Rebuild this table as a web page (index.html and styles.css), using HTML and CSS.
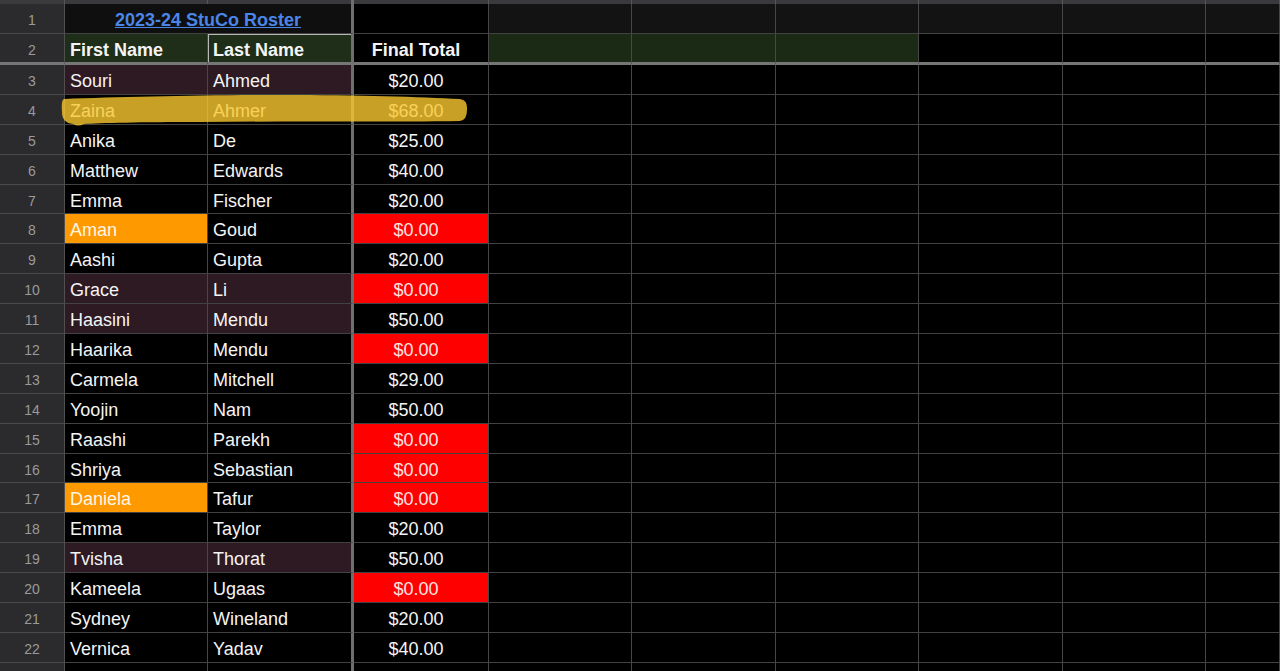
FILE: index.html
```html
<!DOCTYPE html>
<html>
<head>
<meta charset="utf-8">
<title>2023-24 StuCo Roster</title>
<link rel="stylesheet" href="styles.css">
</head>
<body>
<div class="sheet">
  <div class="grid">
    <!-- column header strip -->
    <div class="top"></div><div class="top"></div><div class="top thickr"></div><div class="top"></div><div class="top"></div><div class="top"></div><div class="top"></div><div class="top"></div><div class="top"></div><div class="top"></div>

    <!-- row 1 -->
    <div class="rh">1</div>
    <div class="c r1 title thickr"><span>2023-24 StuCo Roster</span></div>
    <div class="c blk"></div>
    <div class="c r1"></div><div class="c r1"></div><div class="c r1"></div><div class="c r1"></div><div class="c r1"></div><div class="c r1"></div>

    <!-- row 2 -->
    <div class="rh thickb">2</div>
    <div class="c head green thickb">First Name</div>
    <div class="c head green sel thickr thickb">Last Name</div>
    <div class="c head money thickb">Final Total</div>
    <div class="c green2 thickb"></div><div class="c green2 thickb"></div><div class="c green2 thickb"></div><div class="c thickb"></div><div class="c thickb"></div><div class="c thickb"></div>

    <div class="rh">3</div><div class="c maroon">Souri</div><div class="c maroon thickr">Ahmed</div><div class="c money">$20.00</div><div class="c"></div><div class="c"></div><div class="c"></div><div class="c"></div><div class="c"></div><div class="c"></div>
    <div class="rh">4</div><div class="c">Zaina</div><div class="c thickr">Ahmer</div><div class="c money">$68.00</div><div class="c"></div><div class="c"></div><div class="c"></div><div class="c"></div><div class="c"></div><div class="c"></div>
    <div class="rh">5</div><div class="c">Anika</div><div class="c thickr">De</div><div class="c money">$25.00</div><div class="c"></div><div class="c"></div><div class="c"></div><div class="c"></div><div class="c"></div><div class="c"></div>
    <div class="rh">6</div><div class="c">Matthew</div><div class="c thickr">Edwards</div><div class="c money">$40.00</div><div class="c"></div><div class="c"></div><div class="c"></div><div class="c"></div><div class="c"></div><div class="c"></div>
    <div class="rh">7</div><div class="c">Emma</div><div class="c thickr">Fischer</div><div class="c money">$20.00</div><div class="c"></div><div class="c"></div><div class="c"></div><div class="c"></div><div class="c"></div><div class="c"></div>
    <div class="rh">8</div><div class="c orange">Aman</div><div class="c thickr">Goud</div><div class="c money red">$0.00</div><div class="c"></div><div class="c"></div><div class="c"></div><div class="c"></div><div class="c"></div><div class="c"></div>
    <div class="rh">9</div><div class="c">Aashi</div><div class="c thickr">Gupta</div><div class="c money">$20.00</div><div class="c"></div><div class="c"></div><div class="c"></div><div class="c"></div><div class="c"></div><div class="c"></div>
    <div class="rh">10</div><div class="c maroon">Grace</div><div class="c maroon thickr">Li</div><div class="c money red">$0.00</div><div class="c"></div><div class="c"></div><div class="c"></div><div class="c"></div><div class="c"></div><div class="c"></div>
    <div class="rh">11</div><div class="c maroon">Haasini</div><div class="c maroon thickr">Mendu</div><div class="c money">$50.00</div><div class="c"></div><div class="c"></div><div class="c"></div><div class="c"></div><div class="c"></div><div class="c"></div>
    <div class="rh">12</div><div class="c">Haarika</div><div class="c thickr">Mendu</div><div class="c money red">$0.00</div><div class="c"></div><div class="c"></div><div class="c"></div><div class="c"></div><div class="c"></div><div class="c"></div>
    <div class="rh">13</div><div class="c">Carmela</div><div class="c thickr">Mitchell</div><div class="c money">$29.00</div><div class="c"></div><div class="c"></div><div class="c"></div><div class="c"></div><div class="c"></div><div class="c"></div>
    <div class="rh">14</div><div class="c">Yoojin</div><div class="c thickr">Nam</div><div class="c money">$50.00</div><div class="c"></div><div class="c"></div><div class="c"></div><div class="c"></div><div class="c"></div><div class="c"></div>
    <div class="rh">15</div><div class="c">Raashi</div><div class="c thickr">Parekh</div><div class="c money red">$0.00</div><div class="c"></div><div class="c"></div><div class="c"></div><div class="c"></div><div class="c"></div><div class="c"></div>
    <div class="rh">16</div><div class="c">Shriya</div><div class="c thickr">Sebastian</div><div class="c money red">$0.00</div><div class="c"></div><div class="c"></div><div class="c"></div><div class="c"></div><div class="c"></div><div class="c"></div>
    <div class="rh">17</div><div class="c orange">Daniela</div><div class="c thickr">Tafur</div><div class="c money red">$0.00</div><div class="c"></div><div class="c"></div><div class="c"></div><div class="c"></div><div class="c"></div><div class="c"></div>
    <div class="rh">18</div><div class="c">Emma</div><div class="c thickr">Taylor</div><div class="c money">$20.00</div><div class="c"></div><div class="c"></div><div class="c"></div><div class="c"></div><div class="c"></div><div class="c"></div>
    <div class="rh">19</div><div class="c maroon">Tvisha</div><div class="c maroon thickr">Thorat</div><div class="c money">$50.00</div><div class="c"></div><div class="c"></div><div class="c"></div><div class="c"></div><div class="c"></div><div class="c"></div>
    <div class="rh">20</div><div class="c">Kameela</div><div class="c thickr">Ugaas</div><div class="c money red">$0.00</div><div class="c"></div><div class="c"></div><div class="c"></div><div class="c"></div><div class="c"></div><div class="c"></div>
    <div class="rh">21</div><div class="c">Sydney</div><div class="c thickr">Wineland</div><div class="c money">$20.00</div><div class="c"></div><div class="c"></div><div class="c"></div><div class="c"></div><div class="c"></div><div class="c"></div>
    <div class="rh">22</div><div class="c">Vernica</div><div class="c thickr">Yadav</div><div class="c money">$40.00</div><div class="c"></div><div class="c"></div><div class="c"></div><div class="c"></div><div class="c"></div><div class="c"></div>
    <div class="rh"></div><div class="c"></div><div class="c thickr"></div><div class="c"></div><div class="c"></div><div class="c"></div><div class="c"></div><div class="c"></div><div class="c"></div><div class="c"></div>
  </div>

  <svg class="marker" viewBox="0 0 1280 130" width="1280" height="130" aria-hidden="true">
    <path d="M64 99 C120 97 200 95 280 95 C360 95 420 97 460 99 Q468 100 467 110 Q467 120 460 121 C400 122 300 121 200 122 C140 122 100 123 84 124 Q78 127 73 124 Q62 123 62 112 Q61 100 64 99 Z" fill="#fac830" fill-opacity="0.8"/>
  </svg>
</div>
</body>
</html>
```

FILE: styles.css
```css
html, body {
  margin: 0;
  padding: 0;
  background: #000;
}

body {
  font-family: "Liberation Sans", Arial, sans-serif;
  width: 1280px;
  height: 671px;
  overflow: hidden;
}

.sheet {
  position: relative;
  width: 1280px;
  height: 671px;
  overflow: hidden;
}

.grid {
  display: grid;
  grid-template-columns: 65px 143px 146px 135px 143px 144px 143px 144px 143px 1fr;
  grid-template-rows: 4px 30px 31px repeat(20, 29.9px) 30px;
}

.top {
  background: #3a3a3c;
  border-right: 1px solid #575757;
  box-sizing: border-box;
}

.rh {
  box-sizing: border-box;
  background: #2b2b2d;
  color: #9a9a9a;
  font-size: 14px;
  display: flex;
  align-items: center;
  justify-content: center;
  padding-top: 3px;
  border-right: 1px solid #505050;
  border-bottom: 1px solid #4a4a4a;
}

.c {
  box-sizing: border-box;
  background: #000;
  color: #f4f4f4;
  font-size: 18px;
  display: flex;
  align-items: center;
  padding-left: 5px;
  padding-top: 4px;
  white-space: nowrap;
  overflow: hidden;
  border-right: 1px solid #474747;
  border-bottom: 1px solid #424242;
}

.thickr {
  border-right: 3px solid #6e6e6e;
}

.thickb {
  border-bottom: 3px solid #767676;
}

.r1 {
  background: #131313;
}

.blk {
  background: #000;
}

.title {
  grid-column: span 2;
  justify-content: center;
  padding-left: 0;
  background: #0f0f0f;
}

.title span {
  color: #4a86e8;
  font-weight: bold;
  text-decoration: underline;
}

.head {
  font-weight: bold;
}

.green {
  background: #1f2e18;
}

.green2 {
  background: #1b2a15;
}

.sel {
  box-shadow: inset 1px 1px 0 #b8b8b8;
}

.money {
  justify-content: center;
  padding-left: 0;
  padding-right: 10px;
}

.maroon {
  background: #2e1a22;
}

.orange {
  background: #ff9900;
  color: #fff6e6;
}

.red {
  background: #ff0000;
  color: #ffe4e4;
}

.marker {
  position: absolute;
  left: 0;
  top: 0;
  pointer-events: none;
}
```
